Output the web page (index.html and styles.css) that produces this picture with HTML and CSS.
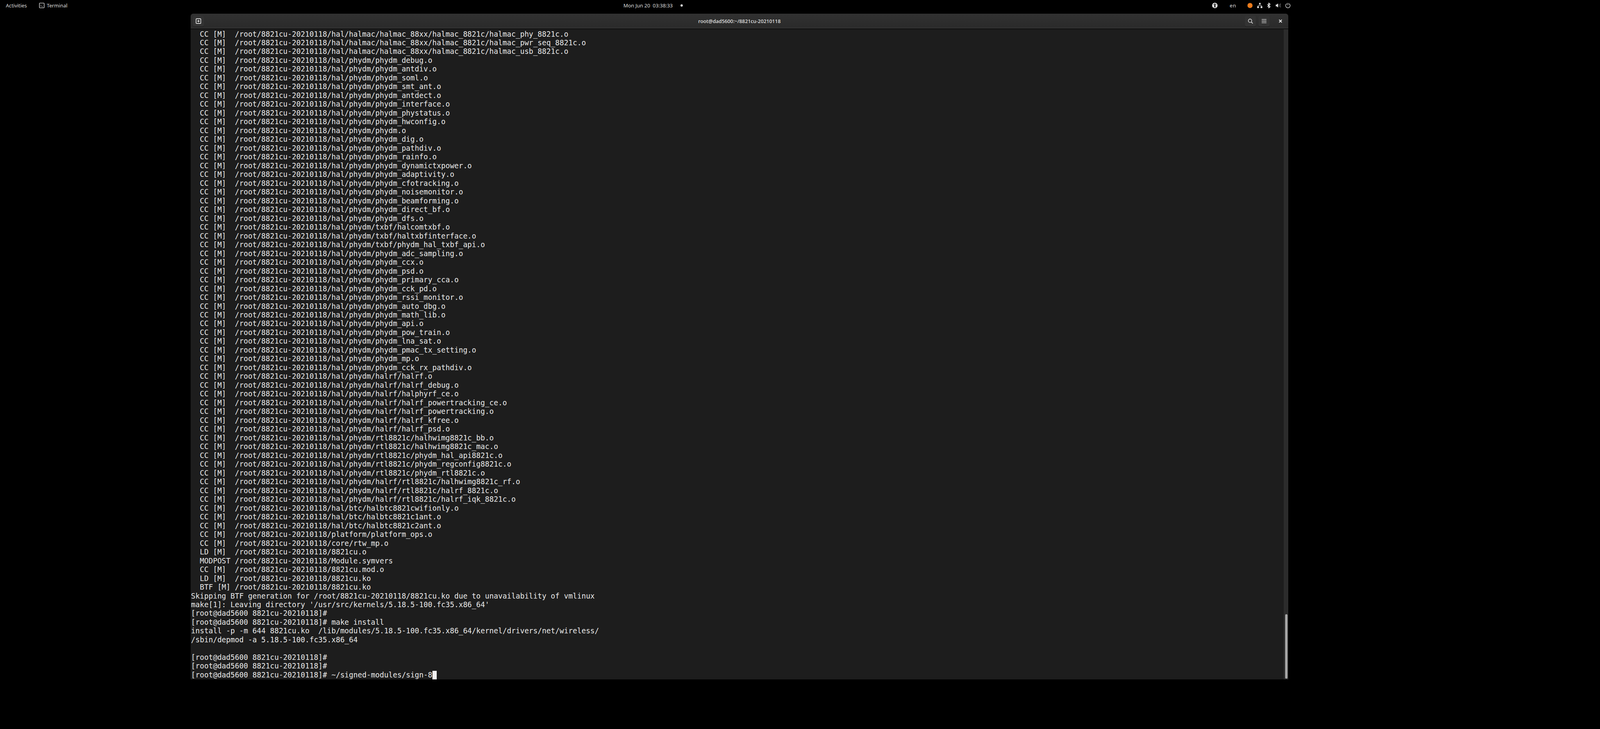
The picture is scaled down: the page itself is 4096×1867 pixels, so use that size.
FILE: index.html
```html
<!DOCTYPE html>
<html lang="en">
<head>
<meta charset="utf-8">
<title>Terminal</title>
<link rel="stylesheet" href="styles.css">
</head>
<body>
<header class="topbar">
  <div class="tb-left">
    <span class="tb-text">Activities</span>
    <svg class="app-icon" viewBox="0 0 16 16"><rect x="1" y="1" width="14" height="14" rx="1.5" fill="none" stroke="#e6e6e6" stroke-width="1.6"/><path d="M4 6l2.5 2.5L4 11M7.5 11.5H11" fill="none" stroke="#e6e6e6" stroke-width="1.1"/></svg>
    <span class="tb-text app-name">Terminal</span>
  </div>
  <div class="tb-clock">
    <span class="tb-text">Mon Jun 20&nbsp; 03:38:33</span>
    <span class="dot"></span>
  </div>
  <div class="tb-right">
    <svg class="tray a11y" viewBox="0 0 16 16"><circle cx="8" cy="8" r="8" fill="#e4e4e4"/><circle cx="8" cy="3.6" r="1.6" fill="#111"/><path d="M3 5.6l3.4 1v3L5.2 14h1.5L8 10.8 9.3 14h1.5L9.6 9.6v-3l3.4-1-.3-1.1-3 .8H6.3l-3-.8z" fill="#111"/></svg>
    <span class="tb-text lang">en</span>
    <svg class="tray orange" viewBox="0 0 16 16"><circle cx="8" cy="8" r="7.5" fill="#e8791a"/><path d="M8 4.5V8" stroke="#f6b26b" stroke-width="1"/></svg>
    <svg class="tray net" viewBox="0 0 16 16" fill="#e4e4e4"><rect x="6" y="0.5" width="4.5" height="4.5"/><rect x="0.5" y="10.5" width="5" height="5"/><rect x="10.5" y="10.5" width="5" height="5"/><path d="M7.7 5h1v2.5h5V10.5h-1V8.5H3.500V10.500h-1V7.500h5.200z"/></svg>
    <svg class="tray bt" viewBox="0 0 16 16"><path d="M4 4.500l8 7L8 15.500V.5l4 4-8 7" fill="none" stroke="#e8e8e8" stroke-width="1.900"/></svg>
    <svg class="tray vol" viewBox="0 0 16 16"><path d="M1 5.500h3L8 2v12L4 10.500H1z" fill="#e4e4e4"/><path d="M10 5.500a4 4 0 0 1 0 5M12 3.500a7 7 0 0 1 0 9M14 2a9 9 0 0 1 0 12" fill="none" stroke="#777" stroke-width="1.200"/></svg>
    <svg class="tray pow" viewBox="0 0 16 16"><path d="M5 2.700a6.500 6.500 0 1 0 6 0M8 .5v7" fill="none" stroke="#e8e8e8" stroke-width="1.500"/></svg>
  </div>
</header>
<main class="window">
  <div class="headerbar">
    <div class="hb-left">
      <button class="hb-btn new-tab"><svg viewBox="0 0 16 16"><rect x="1" y="1" width="14" height="14" rx="2" fill="none" stroke="#eee" stroke-width="1.800"/><path d="M8 4.500v7M4.500 8h7" stroke="#eee" stroke-width="1.800"/></svg></button>
    </div>
    <div class="hb-title">root@dad5600:~/8821cu-20210118</div>
    <div class="hb-right">
      <button class="hb-btn"><svg viewBox="0 0 16 16"><circle cx="7" cy="7" r="5" fill="none" stroke="#eee" stroke-width="1.600"/><path d="M10.500 10.500l4.500 4.500" stroke="#eee" stroke-width="1.800"/></svg></button>
      <button class="hb-btn"><svg viewBox="0 0 16 16"><path d="M1 3h14M1 8h14M1 13h14" stroke="#eee" stroke-width="1.600"/></svg></button>
      <button class="hb-btn close"><svg viewBox="0 0 16 16"><path d="M4 4l8 8M12 4l-8 8" stroke="#eee" stroke-width="2.200"/></svg></button>
    </div>
  </div>
  <div class="term-wrap">
<pre class="term">  CC [M]  /root/8821cu-20210118/hal/halmac/halmac_88xx/halmac_8821c/halmac_phy_8821c.o
  CC [M]  /root/8821cu-20210118/hal/halmac/halmac_88xx/halmac_8821c/halmac_pwr_seq_8821c.o
  CC [M]  /root/8821cu-20210118/hal/halmac/halmac_88xx/halmac_8821c/halmac_usb_8821c.o
  CC [M]  /root/8821cu-20210118/hal/phydm/phydm_debug.o
  CC [M]  /root/8821cu-20210118/hal/phydm/phydm_antdiv.o
  CC [M]  /root/8821cu-20210118/hal/phydm/phydm_soml.o
  CC [M]  /root/8821cu-20210118/hal/phydm/phydm_smt_ant.o
  CC [M]  /root/8821cu-20210118/hal/phydm/phydm_antdect.o
  CC [M]  /root/8821cu-20210118/hal/phydm/phydm_interface.o
  CC [M]  /root/8821cu-20210118/hal/phydm/phydm_phystatus.o
  CC [M]  /root/8821cu-20210118/hal/phydm/phydm_hwconfig.o
  CC [M]  /root/8821cu-20210118/hal/phydm/phydm.o
  CC [M]  /root/8821cu-20210118/hal/phydm/phydm_dig.o
  CC [M]  /root/8821cu-20210118/hal/phydm/phydm_pathdiv.o
  CC [M]  /root/8821cu-20210118/hal/phydm/phydm_rainfo.o
  CC [M]  /root/8821cu-20210118/hal/phydm/phydm_dynamictxpower.o
  CC [M]  /root/8821cu-20210118/hal/phydm/phydm_adaptivity.o
  CC [M]  /root/8821cu-20210118/hal/phydm/phydm_cfotracking.o
  CC [M]  /root/8821cu-20210118/hal/phydm/phydm_noisemonitor.o
  CC [M]  /root/8821cu-20210118/hal/phydm/phydm_beamforming.o
  CC [M]  /root/8821cu-20210118/hal/phydm/phydm_direct_bf.o
  CC [M]  /root/8821cu-20210118/hal/phydm/phydm_dfs.o
  CC [M]  /root/8821cu-20210118/hal/phydm/txbf/halcomtxbf.o
  CC [M]  /root/8821cu-20210118/hal/phydm/txbf/haltxbfinterface.o
  CC [M]  /root/8821cu-20210118/hal/phydm/txbf/phydm_hal_txbf_api.o
  CC [M]  /root/8821cu-20210118/hal/phydm/phydm_adc_sampling.o
  CC [M]  /root/8821cu-20210118/hal/phydm/phydm_ccx.o
  CC [M]  /root/8821cu-20210118/hal/phydm/phydm_psd.o
  CC [M]  /root/8821cu-20210118/hal/phydm/phydm_primary_cca.o
  CC [M]  /root/8821cu-20210118/hal/phydm/phydm_cck_pd.o
  CC [M]  /root/8821cu-20210118/hal/phydm/phydm_rssi_monitor.o
  CC [M]  /root/8821cu-20210118/hal/phydm/phydm_auto_dbg.o
  CC [M]  /root/8821cu-20210118/hal/phydm/phydm_math_lib.o
  CC [M]  /root/8821cu-20210118/hal/phydm/phydm_api.o
  CC [M]  /root/8821cu-20210118/hal/phydm/phydm_pow_train.o
  CC [M]  /root/8821cu-20210118/hal/phydm/phydm_lna_sat.o
  CC [M]  /root/8821cu-20210118/hal/phydm/phydm_pmac_tx_setting.o
  CC [M]  /root/8821cu-20210118/hal/phydm/phydm_mp.o
  CC [M]  /root/8821cu-20210118/hal/phydm/phydm_cck_rx_pathdiv.o
  CC [M]  /root/8821cu-20210118/hal/phydm/halrf/halrf.o
  CC [M]  /root/8821cu-20210118/hal/phydm/halrf/halrf_debug.o
  CC [M]  /root/8821cu-20210118/hal/phydm/halrf/halphyrf_ce.o
  CC [M]  /root/8821cu-20210118/hal/phydm/halrf/halrf_powertracking_ce.o
  CC [M]  /root/8821cu-20210118/hal/phydm/halrf/halrf_powertracking.o
  CC [M]  /root/8821cu-20210118/hal/phydm/halrf/halrf_kfree.o
  CC [M]  /root/8821cu-20210118/hal/phydm/halrf/halrf_psd.o
  CC [M]  /root/8821cu-20210118/hal/phydm/rtl8821c/halhwimg8821c_bb.o
  CC [M]  /root/8821cu-20210118/hal/phydm/rtl8821c/halhwimg8821c_mac.o
  CC [M]  /root/8821cu-20210118/hal/phydm/rtl8821c/phydm_hal_api8821c.o
  CC [M]  /root/8821cu-20210118/hal/phydm/rtl8821c/phydm_regconfig8821c.o
  CC [M]  /root/8821cu-20210118/hal/phydm/rtl8821c/phydm_rtl8821c.o
  CC [M]  /root/8821cu-20210118/hal/phydm/halrf/rtl8821c/halhwimg8821c_rf.o
  CC [M]  /root/8821cu-20210118/hal/phydm/halrf/rtl8821c/halrf_8821c.o
  CC [M]  /root/8821cu-20210118/hal/phydm/halrf/rtl8821c/halrf_iqk_8821c.o
  CC [M]  /root/8821cu-20210118/hal/btc/halbtc8821cwifionly.o
  CC [M]  /root/8821cu-20210118/hal/btc/halbtc8821c1ant.o
  CC [M]  /root/8821cu-20210118/hal/btc/halbtc8821c2ant.o
  CC [M]  /root/8821cu-20210118/platform/platform_ops.o
  CC [M]  /root/8821cu-20210118/core/rtw_mp.o
  LD [M]  /root/8821cu-20210118/8821cu.o
  MODPOST /root/8821cu-20210118/Module.symvers
  CC [M]  /root/8821cu-20210118/8821cu.mod.o
  LD [M]  /root/8821cu-20210118/8821cu.ko
  BTF [M] /root/8821cu-20210118/8821cu.ko
Skipping BTF generation for /root/8821cu-20210118/8821cu.ko due to unavailability of vmlinux
make[1]: Leaving directory '/usr/src/kernels/5.18.5-100.fc35.x86_64'
[root@dad5600 8821cu-20210118]#
[root@dad5600 8821cu-20210118]# make install
install -p -m 644 8821cu.ko  /lib/modules/5.18.5-100.fc35.x86_64/kernel/drivers/net/wireless/
/sbin/depmod -a 5.18.5-100.fc35.x86_64

[root@dad5600 8821cu-20210118]#
[root@dad5600 8821cu-20210118]#
[root@dad5600 8821cu-20210118]# ~/signed-modules/sign-8<span class="cursor"></span></pre>
    <div class="scrollbar"><div class="thumb"></div></div>
  </div>
</main>
</body>
</html>
```
FILE: styles.css
```css
* { box-sizing: border-box; }
html, body { margin: 0; height: 100%; background: #000; overflow: hidden; }
body { display: flex; flex-direction: column; }

.topbar {
  height: 34.5px;
  flex: none;
  display: grid;
  grid-template-columns: 1596px 640px 1fr;
  align-items: center;
  padding-bottom: 7px;
  color: #dedede;
  font-family: "Noto Sans", sans-serif;
  font-size: 12.9px;
}
.tb-text { white-space: nowrap; }
.tb-left { display: flex; align-items: center; padding-left: 15px; }
.app-icon { width: 14px; height: 14px; margin-left: 31px; }
.app-name { margin-left: 6px; }
.tb-clock { display: flex; align-items: center; gap: 20px; }
.dot { width: 6px; height: 6px; border-radius: 50%; background: #d8d8d8; }
.tb-right { display: flex; align-items: center; padding-left: 867px; }
.tray { width: 14px; height: 14px; flex: none; }
.lang { margin-left: 31px; font-size: 13px; letter-spacing: .6px; }
.orange { margin-left: 28px; }
.net { margin-left: 11px; }
.bt { margin-left: 9px; }
.vol { margin-left: 10px; }
.pow { margin-left: 11px; }

.window {
  width: 2810px;
  height: 1705px;
  margin-left: 488px;
  display: flex;
  flex-direction: column;
  flex: none;
  background: #1d1d1d;
  border-radius: 7px 7px 0 0;
  overflow: hidden;
}
.headerbar {
  height: 40px;
  flex: none;
  display: grid;
  grid-template-columns: 1fr auto 1fr;
  align-items: center;
  padding: 0 6px;
  background: linear-gradient(#313131, #2a2a2a);
  border-bottom: 2px solid #0f0f0f;
  box-shadow: inset 0 -3px 0 #303030;
}
.hb-left { display: flex; }
.hb-right { display: flex; justify-content: flex-end; gap: 7px; }
.hb-title {
  color: #e4e4e4;
  font-family: "Noto Sans", sans-serif;
  font-size: 12.75px;
  font-weight: 500;
  white-space: nowrap;
}
.hb-btn {
  width: 28px;
  height: 28px;
  padding: 0;
  margin: 0;
  display: flex;
  align-items: center;
  justify-content: center;
  background: #333;
  border: 0;
  border-radius: 4px;
  box-shadow: 0 1px 0 #1c1c1c;
}
.hb-btn svg { width: 14px; height: 14px; display: block; }
.hb-btn.close { background: none; box-shadow: none; margin-left: 7px; }

.term-wrap { flex: 1; min-height: 0; display: flex; }
.term {
  flex: 1;
  margin: 0;
  padding: 2px 0 0 1px;
  color: #e8e8e8;
  font-family: "DejaVu Sans Mono", monospace;
  font-size: 18.66px;
  line-height: 22.48px;
  overflow: hidden;
}
.cursor {
  display: inline-block;
  width: 11.23px;
  height: 22.48px;
  background: #f2f2f2;
  vertical-align: top;
}
.scrollbar {
  width: 13px;
  flex: none;
  background: #2c2c2c;
  display: flex;
  flex-direction: column;
  justify-content: flex-end;
  padding: 0 2px 2px 4px;
  border-left: 1px solid #181818;
}
.thumb {
  height: 165px;
  border-radius: 4px;
  background: #a8a8a8;
}
```
